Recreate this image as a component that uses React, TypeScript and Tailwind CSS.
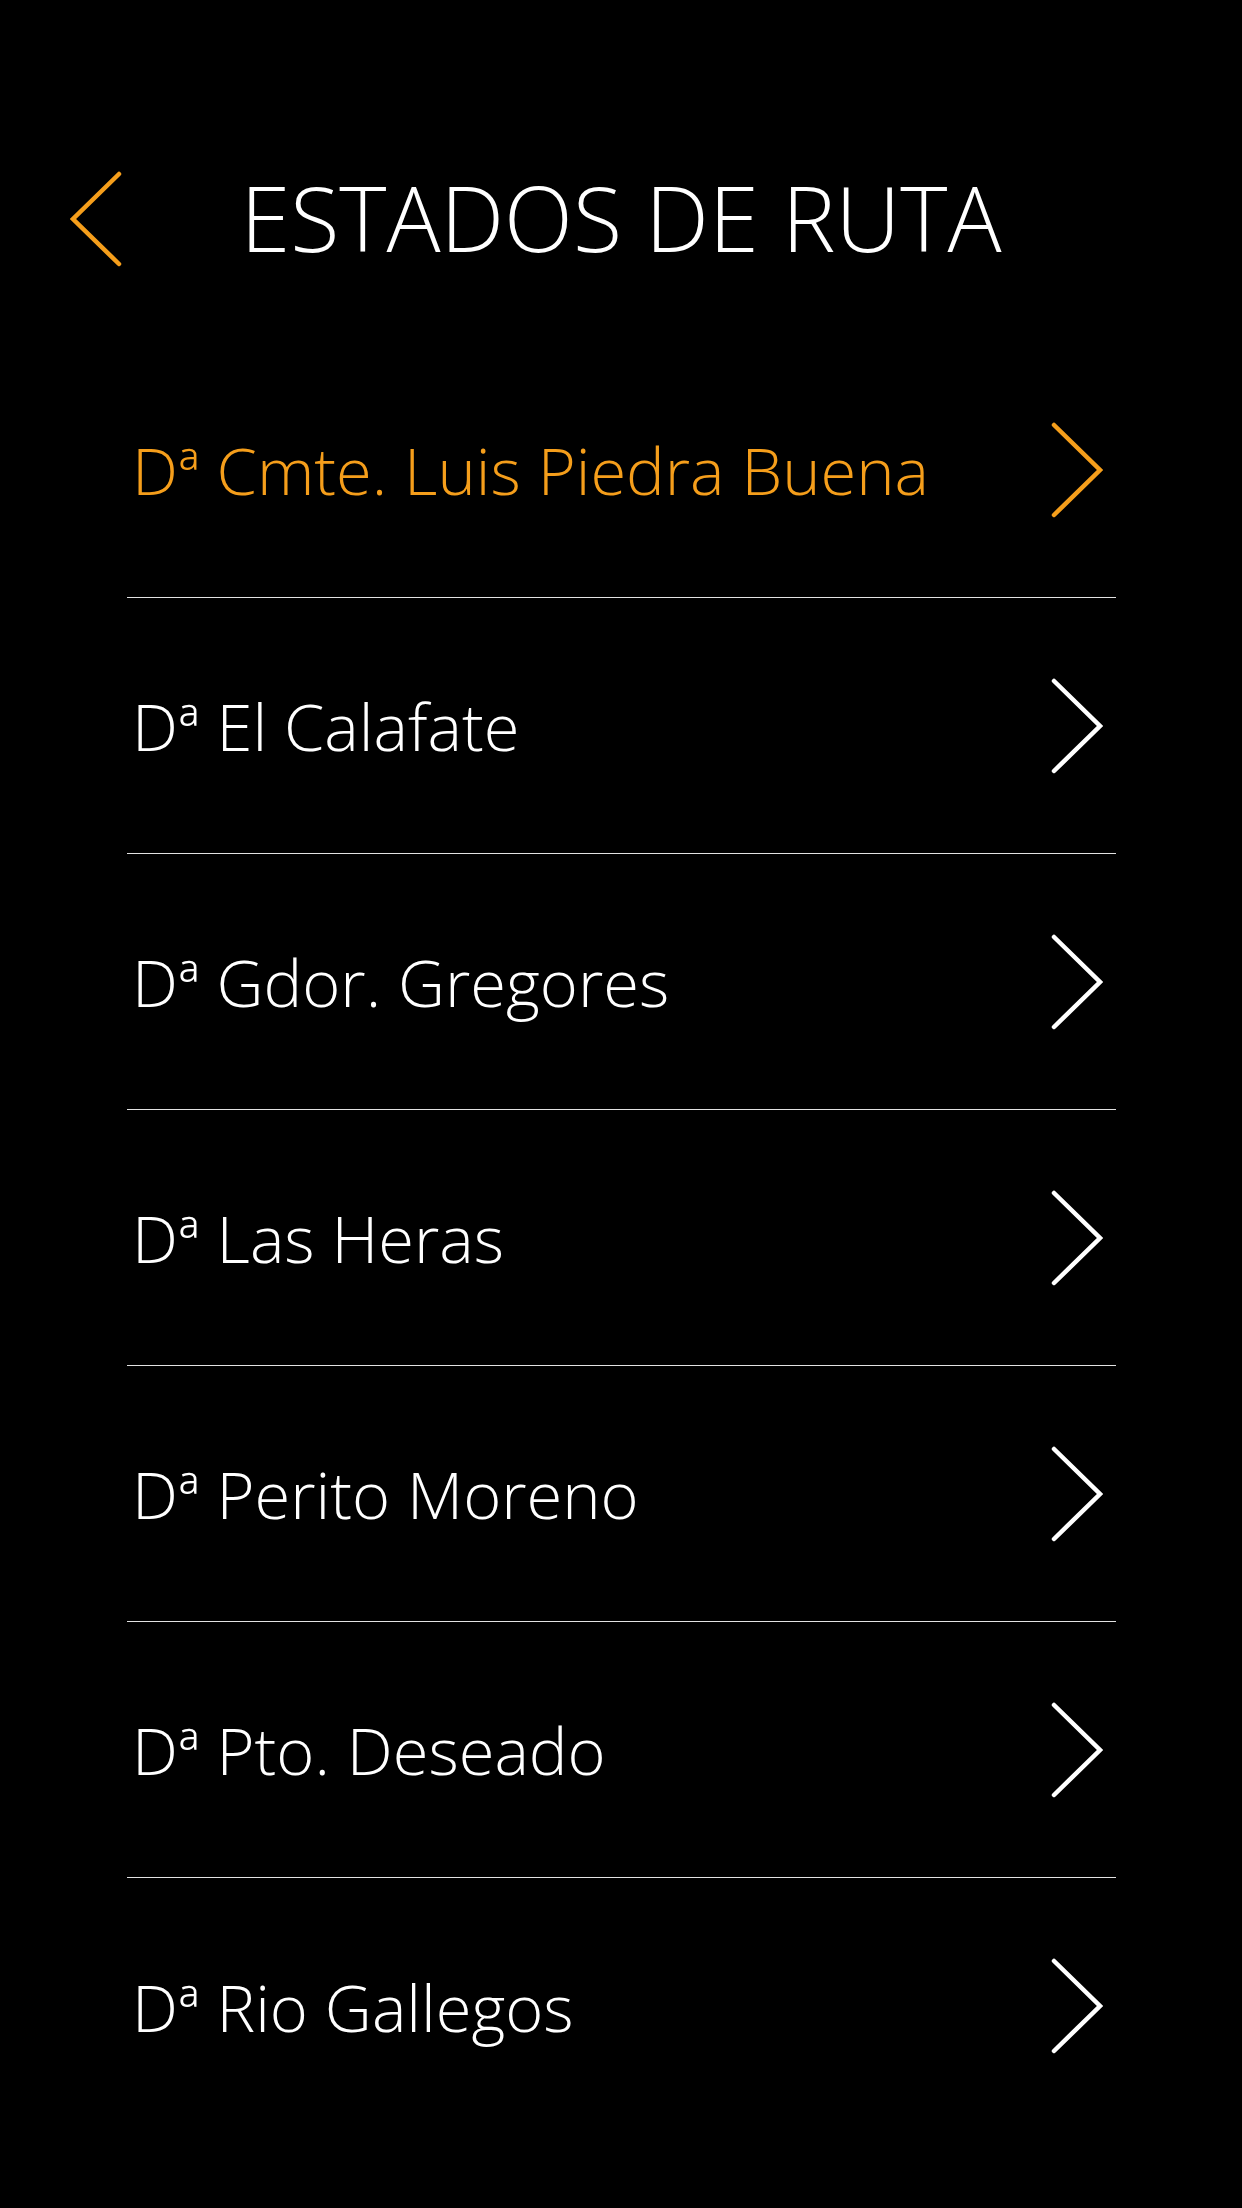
import { useState } from 'react'

const routes = [
  'Dª Cmte. Luis Piedra Buena',
  'Dª El Calafate',
  'Dª Gdor. Gregores',
  'Dª Las Heras',
  'Dª Perito Moreno',
  'Dª Pto. Deseado',
  'Dª Rio Gallegos',
]

const Chevron = ({ dir, className }: { dir: 'left' | 'right'; className: string }) => (
  <svg width="52" height="96" viewBox="0 0 52 96" fill="none" className={className}>
    <path
      d={dir === 'right' ? 'M3 3 L49 48 L3 93' : 'M49 3 L3 48 L49 93'}
      stroke="currentColor"
      strokeWidth="4.5"
      strokeLinecap="round"
      strokeLinejoin="miter"
    />
  </svg>
)

export default function App() {
  const [active, setActive] = useState(0)

  return (
    <div className="min-h-[2208px] w-full bg-black pt-[172px] text-white font-['Open_Sans',sans-serif] font-light">
      {/* Header */}
      <header className="grid h-[90px] grid-cols-[1fr_auto_1fr] items-center">
        <button className="flex h-[90px] items-center justify-start pl-[70px] text-[#f59e1b]">
          <Chevron dir="left" className="block translate-y-[2px]" />
        </button>
        <h1 className="text-[90px] leading-[90px] font-light">ESTADOS DE RUTA</h1>
        <div />
      </header>

      {/* Route list */}
      <ul className="mt-[80px] ml-[127px] w-[989px]">
        {routes.map((name, i) => (
          <li
            key={name}
            onClick={() => setActive(i)}
            className={`flex h-[256px] cursor-pointer items-center justify-between pl-[5px] pr-[13px] ${
              i < routes.length - 1 ? 'border-b border-[#e2e2e2]' : ''
            } ${i === active ? 'text-[#f59e1b]' : 'text-white'}`}
          >
            <span className="pt-[2px] text-[65px] leading-[65px] font-light">{name}</span>
            <Chevron dir="right" className="block" />
          </li>
        ))}
      </ul>
    </div>
  )
}
